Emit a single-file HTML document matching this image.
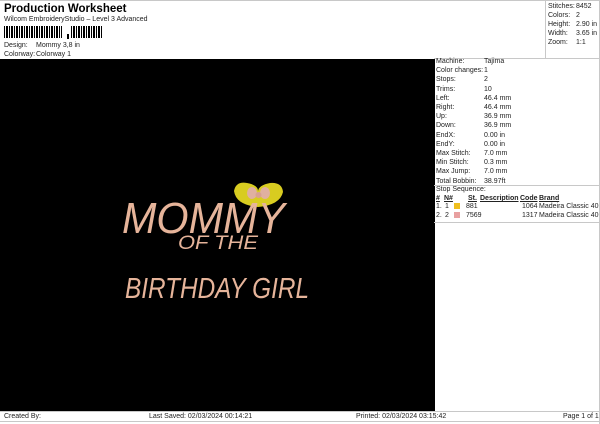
<!DOCTYPE html>
<html><head><style>
*{margin:0;padding:0;box-sizing:border-box}
body{width:600px;height:424px;background:#fff;font-family:"Liberation Sans",sans-serif;font-size:7px;color:#222;position:relative;overflow:hidden}
.a{position:absolute;white-space:nowrap;line-height:8px}
.l{position:absolute;background:#c8c8c8}
</style></head><body>
<div class="a" style="left:4px;top:3px;font-size:11.5px;font-weight:bold;line-height:12px;color:#000">Production Worksheet</div>
<div class="a" style="left:4px;top:16px">Wilcom EmbroideryStudio – Level 3 Advanced</div>
<svg style="position:absolute;left:4px;top:26px" width="100" height="14">
<g fill="#000">
<rect x="0" y="0" width="1" height="12"/><rect x="2" y="0" width="2" height="12"/><rect x="5" y="0" width="1" height="12"/><rect x="7" y="0" width="2" height="12"/><rect x="10" y="0" width="1" height="12"/><rect x="12" y="0" width="2" height="12"/><rect x="15" y="0" width="1" height="12"/><rect x="17" y="0" width="2" height="12"/><rect x="20" y="0" width="1" height="12"/><rect x="22" y="0" width="2" height="12"/><rect x="25" y="0" width="1" height="12"/><rect x="27" y="0" width="2" height="12"/><rect x="30" y="0" width="1" height="12"/><rect x="32" y="0" width="2" height="12"/><rect x="35" y="0" width="1" height="12"/><rect x="37" y="0" width="2" height="12"/><rect x="40" y="0" width="1" height="12"/><rect x="42" y="0" width="2" height="12"/><rect x="45" y="0" width="1" height="12"/><rect x="47" y="0" width="2" height="12"/><rect x="50" y="0" width="1" height="12"/><rect x="52" y="0" width="2" height="12"/><rect x="55" y="0" width="1" height="12"/><rect x="57" y="0" width="1" height="12"/>
<rect x="63" y="8" width="2" height="5"/>
<rect x="67" y="0" width="1" height="12"/><rect x="69" y="0" width="2" height="12"/><rect x="72" y="0" width="1" height="12"/><rect x="74" y="0" width="2" height="12"/><rect x="77" y="0" width="1" height="12"/><rect x="79" y="0" width="2" height="12"/><rect x="82" y="0" width="1" height="12"/><rect x="84" y="0" width="2" height="12"/><rect x="87" y="0" width="1" height="12"/><rect x="89" y="0" width="2" height="12"/><rect x="92" y="0" width="1" height="12"/><rect x="94" y="0" width="2" height="12"/><rect x="97" y="0" width="1" height="12"/>
</g></svg>
<div class="a" style="left:4px;top:42px">Design:</div><div class="a" style="left:36px;top:42px">Mommy 3,8 in</div>
<div class="a" style="left:4px;top:51px">Colorway:</div><div class="a" style="left:36px;top:51px">Colorway 1</div>
<div class="l" style="left:0;top:0;width:600px;height:1px"></div>
<div class="l" style="left:599px;top:0;width:1px;height:424px"></div>
<div class="l" style="left:545px;top:0;width:1px;height:59px"></div>
<div class="a" style="left:548px;top:3px">Stitches:</div><div class="a" style="left:576px;top:3px">8452</div>
<div class="a" style="left:548px;top:12px">Colors:</div><div class="a" style="left:576px;top:12px">2</div>
<div class="a" style="left:548px;top:21px">Height:</div><div class="a" style="left:576px;top:21px">2.90 in</div>
<div class="a" style="left:548px;top:30px">Width:</div><div class="a" style="left:576px;top:30px">3.65 in</div>
<div class="a" style="left:548px;top:39px">Zoom:</div><div class="a" style="left:576px;top:39px">1:1</div>
<div style="position:absolute;left:0;top:59px;width:434px;height:352px;background:#000"></div>
<div class="l" style="left:434px;top:58px;width:166px;height:1px"></div>
<div style="position:absolute;left:434px;top:59px;width:1px;height:352px;background:#000"></div>
<div style="position:absolute;left:436px;top:58px;width:160px">
<div class="a" style="top:0">Machine:</div><div class="a" style="left:48px;top:0">Tajima</div>
<div class="a" style="top:9.2px">Color changes:</div><div class="a" style="left:48px;top:9.2px">1</div>
<div class="a" style="top:18.4px">Stops:</div><div class="a" style="left:48px;top:18.4px">2</div>
<div class="a" style="top:27.6px">Trims:</div><div class="a" style="left:48px;top:27.6px">10</div>
<div class="a" style="top:36.8px">Left:</div><div class="a" style="left:48px;top:36.8px">46.4 mm</div>
<div class="a" style="top:46px">Right:</div><div class="a" style="left:48px;top:46px">46.4 mm</div>
<div class="a" style="top:55.2px">Up:</div><div class="a" style="left:48px;top:55.2px">36.9 mm</div>
<div class="a" style="top:64.4px">Down:</div><div class="a" style="left:48px;top:64.4px">36.9 mm</div>
<div class="a" style="top:73.6px">EndX:</div><div class="a" style="left:48px;top:73.6px">0.00 in</div>
<div class="a" style="top:82.8px">EndY:</div><div class="a" style="left:48px;top:82.8px">0.00 in</div>
<div class="a" style="top:92px">Max Stitch:</div><div class="a" style="left:48px;top:92px">7.0 mm</div>
<div class="a" style="top:101.2px">Min Stitch:</div><div class="a" style="left:48px;top:101.2px">0.3 mm</div>
<div class="a" style="top:110.4px">Max Jump:</div><div class="a" style="left:48px;top:110.4px">7.0 mm</div>
<div class="a" style="top:119.6px">Total Bobbin:</div><div class="a" style="left:48px;top:119.6px">38.97ft</div>
</div>
<div class="l" style="left:434px;top:185px;width:166px;height:1px"></div>
<div class="a" style="left:436px;top:186px">Stop Sequence:</div>
<div class="a" style="left:436px;top:195px;font-weight:bold;text-decoration:underline">#</div>
<div class="a" style="left:444px;top:195px;font-weight:bold;text-decoration:underline">N#</div>
<div class="a" style="left:468px;top:195px;font-weight:bold;text-decoration:underline">St.</div>
<div class="a" style="left:480px;top:195px;font-weight:bold;text-decoration:underline">Description</div>
<div class="a" style="left:520px;top:195px;font-weight:bold;text-decoration:underline">Code</div>
<div class="a" style="left:539px;top:195px;font-weight:bold;text-decoration:underline">Brand</div>
<div class="a" style="left:436px;top:203px">1.</div><div class="a" style="left:445px;top:203px">1</div>
<div style="position:absolute;left:454px;top:203px;width:6px;height:6px;background:#f0c020"></div>
<div class="a" style="left:466px;top:203px">881</div><div class="a" style="left:522px;top:203px">1064</div><div class="a" style="left:539px;top:203px">Madeira Classic 40</div>
<div class="a" style="left:436px;top:212px">2.</div><div class="a" style="left:445px;top:212px">2</div>
<div style="position:absolute;left:454px;top:212px;width:6px;height:6px;background:#e8a0a0"></div>
<div class="a" style="left:466px;top:212px">7569</div><div class="a" style="left:522px;top:212px">1317</div><div class="a" style="left:539px;top:212px">Madeira Classic 40</div>
<div class="l" style="left:434px;top:222px;width:166px;height:1px"></div>
<div class="l" style="left:0;top:411px;width:600px;height:1px"></div>
<div class="l" style="left:0;top:421px;width:600px;height:1px"></div>
<div class="a" style="left:4px;top:413px">Created By:</div>
<div class="a" style="left:149px;top:413px">Last Saved: 02/03/2024 00:14:21</div>
<div class="a" style="left:356px;top:413px">Printed: 02/03/2024 03:15:42</div>
<div class="a" style="left:563px;top:413px">Page 1 of 1</div>
<svg style="position:absolute;left:0;top:59px" width="434" height="352">
<path d="M234 132 Q236 122 247 124 Q258 126 258 132 Q259 126 270 124 Q282 123 283 133 Q280 146 258 148 Q236 146 234 132Z" fill="#d8cc20"/>
<ellipse cx="252" cy="134" rx="5" ry="6" fill="#e0b0a0"/>
<ellipse cx="265" cy="134" rx="5" ry="6" fill="#e0b0a0"/>
<circle cx="258.5" cy="136" r="3" fill="#d8a090"/>
<g fill="#e6b49a" font-family="'Liberation Sans',sans-serif" font-style="italic">
<text x="122" y="174" font-size="44" textLength="163" lengthAdjust="spacingAndGlyphs">MOMMY</text>
<text x="178" y="190" font-size="19" textLength="80" lengthAdjust="spacingAndGlyphs">OF THE</text>
<text x="125" y="239" font-size="29" textLength="184" lengthAdjust="spacingAndGlyphs">BIRTHDAY GIRL</text>
</g>
</svg>
</body></html>
